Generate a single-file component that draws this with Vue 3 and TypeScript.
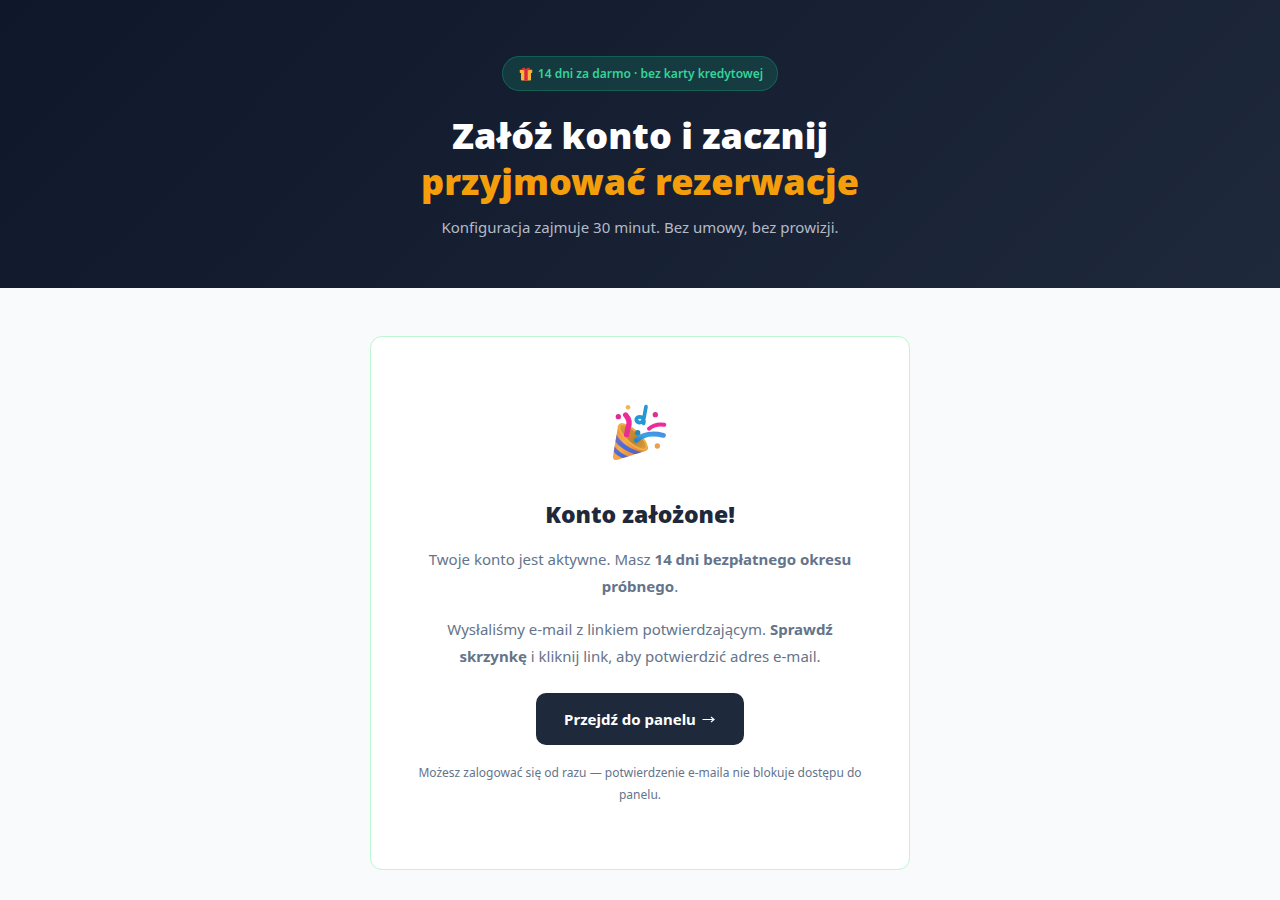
<script setup lang="ts">
const panelUrl = '#panel'
</script>

<template>
  <div class="page">
    <header class="hero">
      <div class="badge">
        <svg class="gift" viewBox="0 0 14 14" aria-hidden="true">
          <path d="M2 5.5h10v7.200q0 .8-.8.8H2.800q-.8 0-.8-.8z" fill="#f9b43a" />
          <path d="M1.300 2.800h11.400q.5 0 .5.5v2.200q0 .5-.5.5H1.300q-.5 0-.5-.5V3.300q0-.5.5-.5z" fill="#fbb03b" />
          <path d="M5.300 3h3.400v10.500H5.300z" fill="#d8283c" />
          <path d="M7 3.200C5.200 3.500 3 3.200 3 1.800 3.200.2 6.400.2 7 2.400 7.600.2 10.800.2 11 1.800c0 1.400-2.200 1.700-4 1.400z" fill="#e0303f" />
        </svg>
        <span>14 dni za darmo · bez karty kredytowej</span>
      </div>
      <h1>Załóż konto i zacznij<br /><span class="accent">przyjmować rezerwacje</span></h1>
      <p class="lead">Konfiguracja zajmuje 30 minut. Bez umowy, bez prowizji.</p>
    </header>
    <main class="content">
      <section class="card">
        <svg class="popper" viewBox="0 0 240 225" aria-hidden="true">
          <defs>
            <linearGradient id="cone" x1="0" y1="0" x2="1" y2="0.6">
              <stop offset="0" stop-color="#e88b2e" />
              <stop offset="0.5" stop-color="#f6a94a" />
              <stop offset="1" stop-color="#d9772b" />
            </linearGradient>
            <linearGradient id="band" x1="0" y1="0" x2="1" y2="1">
              <stop offset="0" stop-color="#8a68b8" />
              <stop offset="0.5" stop-color="#416fe0" />
              <stop offset="1" stop-color="#6a57b8" />
            </linearGradient>
            <linearGradient id="inside" x1="0" y1="0" x2="1" y2="0">
              <stop offset="0" stop-color="#d99a3c" />
              <stop offset="0.6" stop-color="#bd822c" />
              <stop offset="1" stop-color="#d79c3c" />
            </linearGradient>
            <linearGradient id="ribbon" x1="0" y1="1" x2="1" y2="0">
              <stop offset="0" stop-color="#2583c9" />
              <stop offset="0.5" stop-color="#36a5e4" />
              <stop offset="1" stop-color="#4a8fe6" />
            </linearGradient>
            <clipPath id="coneClip">
              <path d="M54 94 39 184q-1 12 11 11l88-28q8-4 5-12L72 87q-14-6-18 7z" />
            </clipPath>
          </defs>
          <g clip-path="url(#coneClip)">
            <path d="M30 80h120v120H30z" fill="url(#cone)" />
            <path d="M48 117Q70 158 128 173L112 181Q64 166 42 135z" fill="url(#band)" />
            <path d="M40 149Q58 178 96 187L78 193Q50 185 36 164z" fill="url(#band)" />
          </g>
          <g transform="translate(99 126) rotate(42)">
            <ellipse rx="56" ry="22" fill="#f0ae43" />
            <ellipse rx="49" ry="16" fill="url(#inside)" />
          </g>
          <path d="M77 60Q93 77 84 99L80 119" fill="none" stroke="#ed2a98" stroke-width="16" stroke-linecap="round" />
          <circle cx="113" cy="113" r="8" fill="#2586bd" />
          <path d="M109 136Q138 109 190 121" fill="none" stroke="url(#ribbon)" stroke-width="15" stroke-linecap="round" />
          <path d="M138 35L132 68Q130 82 118 83Q108 81 109 72Q113 64 123 66Q134 71 131 85" fill="none" stroke="#2597d5" stroke-width="11" stroke-linecap="round" stroke-linejoin="round" />
          <path d="M147 101Q165 85 193 89" fill="none" stroke="#ee2b9c" stroke-width="12" stroke-linecap="round" />
          <circle cx="84" cy="37" r="7" fill="#edb855" />
          <circle cx="55" cy="65" r="8" fill="#db2b99" />
          <circle cx="166" cy="59" r="8" fill="#d9318f" />
          <circle cx="172" cy="153" r="8" fill="#eca04f" />
        </svg>
        <h2>Konto założone!</h2>
        <p class="text">Twoje konto jest aktywne. Masz <strong>14 dni bezpłatnego okresu próbnego</strong>.</p>
        <p class="text">Wysłaliśmy e-mail z linkiem potwierdzającym. <strong>Sprawdź skrzynkę</strong> i kliknij link, aby potwierdzić adres e-mail.</p>
        <a class="button" :href="panelUrl">Przejdź do panelu
          <svg class="arrow" viewBox="0 0 14 12" aria-hidden="true">
            <path d="M1 6.500h11.500M9.500 4l3 2.500-3 2.500" fill="none" stroke="currentColor" stroke-width="1.200" />
          </svg>
        </a>
        <p class="note">Możesz zalogować się od razu — potwierdzenie e-maila nie blokuje dostępu do panelu.</p>
      </section>
    </main>
  </div>
</template>

<style>
body {
  margin: 0;
  background: #f8fafc;
}
</style>

<style scoped>
.page {
  min-height: 100vh;
  background: #f8fafc;
  color: #1e293b;
  font-family: "Segoe UI", "Noto Sans", "Open Sans", sans-serif;
  font-size: 15px;
  line-height: 27px;
  box-sizing: border-box;
}
.hero {
  display: flex;
  flex-direction: column;
  align-items: center;
  padding: 56px 24px 47px;
  background: linear-gradient(135deg, #0f172a, #1e293b);
  text-align: center;
}
.badge {
  display: flex;
  align-items: center;
  gap: 5px;
  padding: 6px 14px 6px 16px;
  border: 1px solid rgba(16, 185, 129, 0.3);
  border-radius: 20px;
  background: rgba(16, 185, 129, 0.18);
  color: #34d399;
  font-size: 12px;
  font-weight: 600;
  line-height: 21px;
}
.gift {
  width: 14px;
  height: 14px;
}
h1 {
  margin: 22px 0 9px;
  color: #fff;
  font-size: 36px;
  font-weight: 900;
  line-height: 46px;
}
.accent {
  color: #f59e0b;
}
.lead {
  margin: 0;
  color: #b4bac5;
}
.content {
  padding: 48px 24px 30px;
}
.card {
  display: flex;
  flex-direction: column;
  align-items: center;
  box-sizing: border-box;
  max-width: 540px;
  margin: 0 auto;
  padding: 58px 40px 63px;
  border: 1px solid #bbf7d0;
  border-radius: 12px;
  background: #fff;
  text-align: center;
}
.popper {
  width: 80px;
  height: 75px;
}
h2 {
  margin: 24px 0 12px;
  font-size: 23px;
  font-weight: 900;
  line-height: 40px;
}
.text {
  max-width: 440px;
  margin: 0 0 16px;
  color: #64748b;
}
.button {
  display: flex;
  align-items: center;
  gap: 5px;
  margin-top: 7px;
  padding: 12px 28px;
  border-radius: 10px;
  background: #1e293b;
  color: #fff;
  font-weight: 700;
  line-height: 28px;
  text-decoration: none;
}
.arrow {
  width: 15px;
  height: 12px;
}
.note {
  margin: 17px 0 0;
  color: #64748b;
  font-size: 12px;
  line-height: 22px;
}
</style>
